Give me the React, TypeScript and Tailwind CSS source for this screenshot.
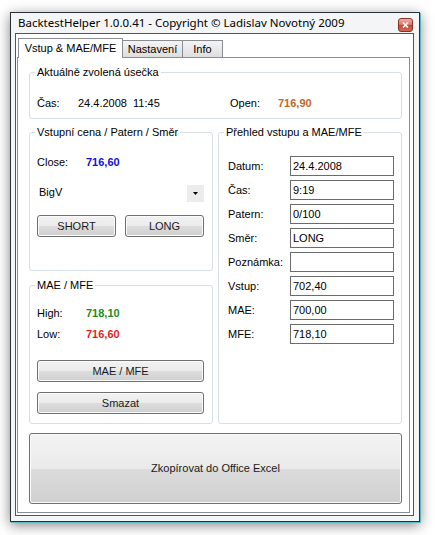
import React from 'react';

const Btn = ({ children, className = '' }: { children: React.ReactNode; className?: string }) => (
	<div
		className={`flex items-center justify-center rounded-[3px] border border-[#707070] bg-[linear-gradient(#f2f2f2_0%,#ebebeb_50%,#dddddd_50%,#cfcfcf_100%)] text-[11px] font-normal leading-[13px] text-[#1a1a1a] shadow-[inset_0_0_0_1px_#fbfbfb] ${className}`}
	>
		{children}
	</div>
);

const Group = ({
	title,
	className = '',
	children,
}: {
	title: string;
	className?: string;
	children: React.ReactNode;
}) => (
	<fieldset className={`rounded-[3px] border border-[#d5dfe5] ${className}`}>
		<legend className="ml-[5px] px-[2px] text-[11px] leading-[13px] text-black">{title}</legend>
		{children}
	</fieldset>
);

const Field = ({ label, value }: { label: string; value: string }) => (
	<div className="flex h-[20px] items-center">
		<span className="w-[62px]">{label}</span>
		<div className="flex h-[20px] w-[104px] items-center border border-[#6b6b6b] bg-white pl-[2px]">{value}</div>
	</div>
);

export default function App() {
	const rows = [
		['Datum:', '24.4.2008'],
		['Čas:', '9:19'],
		['Patern:', '0/100'],
		['Směr:', 'LONG'],
		['Poznámka:', ''],
		['Vstup:', '702,40'],
		['MAE:', '700,00'],
		['MFE:', '718,10'],
	];

	return (
		<div className="h-[535px] w-[435px] bg-white pl-[10px] pt-[12px] font-['Liberation_Sans',Arial,sans-serif] text-[11px] leading-[13px] text-black">
			<div className="flex h-[510px] w-[410px] flex-col border border-[#2a2f33] bg-[#f3f5f7] shadow-[1px_1px_0_#5fb8c0,0_3px_12px_rgba(0,0,0,0.5)]">
				{/* title bar */}
				<div className="flex h-[20px] shrink-0 items-start">
					<span className="ml-[7px] mt-[2px] font-['Noto_Sans',sans-serif] text-[11.5px] leading-[16px] text-black">
						BacktestHelper 1.0.0.41 - Copyright © Ladislav Novotný 2009
					</span>
					<div className="ml-auto mr-[6px] mt-[5px] flex h-[14px] w-[15px] items-center justify-center rounded-[3px] border border-[#8b3027] bg-[linear-gradient(#eab0a5_0%,#d77565_50%,#c2463a_50%,#cf6a55_100%)]">
						<svg width="7" height="6" viewBox="0 0 7 6">
							<path d="M1 0.5 L6 5.5 M6 0.5 L1 5.5" stroke="white" strokeWidth="1.6" />
						</svg>
					</div>
				</div>

				{/* client area */}
				<div className="mb-[5px] ml-[4px] mr-[5px] flex h-[483px] flex-col border border-[#50565c] bg-white pb-[2px] pl-[1px] pr-[3px] pt-[4px]">
					<div className="flex h-[19px] items-end pl-[1px]">
						<div className="relative z-10 -mb-[1px] flex h-[20px] w-[105px] items-center justify-center border border-b-0 border-[#898c95] bg-white">
							Vstup &amp; MAE/MFE
						</div>
						<div className="flex h-[17px] w-[60px] items-center justify-center border border-b-0 border-l-0 border-[#898c95] bg-[linear-gradient(#f4f4f4,#dedede)]">
							Nastavení
						</div>
						<div className="flex h-[17px] w-[40px] items-center justify-center border border-b-0 border-l-0 border-[#898c95] bg-[linear-gradient(#f4f4f4,#dedede)]">
							Info
						</div>
					</div>

					<div className="flex h-[456px] w-[393px] flex-col border border-[#898c95] bg-white pl-[11px] pt-[8px]">
						<Group title="Aktuálně zvolená úsečka" className="h-[53px] w-[373px]">
							<div className="mt-[18px] flex pl-[7px]">
								<span className="w-[41px]">Čas:</span>
								<span className="w-[152px]">24.4.2008&nbsp;&nbsp;11:45</span>
								<span className="w-[48px]">Open:</span>
								<span className="font-bold text-[#c8642a]">716,90</span>
							</div>
						</Group>

						<div className="mt-[7px] flex h-[298px] w-[373px] gap-[5px]">
							<div className="flex w-[184px] flex-col">
								<Group title="Vstupní cena / Patern / Směr" className="h-[145px] w-[184px]">
									<div className="flex flex-col pl-[7px]">
										<div className="mt-[17px] flex">
											<span className="w-[49px]">Close:</span>
											<span className="font-bold text-[#1010d8]">716,60</span>
										</div>
										<div className="mt-[13px] flex h-[21px] w-[167px] items-center">
											<span className="pl-[2px]">BigV</span>
											<div className="ml-auto mt-[1px] flex h-[17px] w-[17px] items-center justify-center bg-[#ececec]">
												<svg width="5" height="3" viewBox="0 0 5 3">
													<path d="M0 0 H5 L2.5 3 Z" fill="#000" />
												</svg>
											</div>
										</div>
										<div className="mt-[12px] flex gap-[9px]">
											<Btn className="h-[22px] w-[79px]">SHORT</Btn>
											<Btn className="h-[22px] w-[79px]">LONG</Btn>
										</div>
									</div>
								</Group>
								<Group title="MAE / MFE" className="mt-[8px] h-[145px] w-[184px]">
									<div className="flex flex-col pl-[7px]">
										<div className="mt-[15px] flex">
											<span className="w-[49px]">High:</span>
											<span className="font-bold text-[#1e8c1e]">718,10</span>
										</div>
										<div className="mt-[8px] flex">
											<span className="w-[49px]">Low:</span>
											<span className="font-bold text-[#e41e1e]">716,60</span>
										</div>
										<Btn className="mt-[19px] h-[22px] w-[167px]">MAE / MFE</Btn>
										<Btn className="mt-[10px] h-[22px] w-[167px]">Smazat</Btn>
									</div>
								</Group>
							</div>
							<Group title="Přehled vstupu a MAE/MFE" className="h-[298px] w-[184px]">
								<div className="mt-[17px] flex flex-col gap-[4px] pl-[9px]">
									{rows.map(([l, v]) => (
										<Field key={l} label={l} value={v} />
									))}
								</div>
							</Group>
						</div>

						<Btn className="mt-[9px] h-[71px] w-[373px] bg-[linear-gradient(#f3f3f3_0%,#eaeaea_50%,#dcdcdc_50%,#d0d0d0_100%)]">
							Zkopírovat do Office Excel
						</Btn>
					</div>
				</div>
			</div>
		</div>
	);
}
